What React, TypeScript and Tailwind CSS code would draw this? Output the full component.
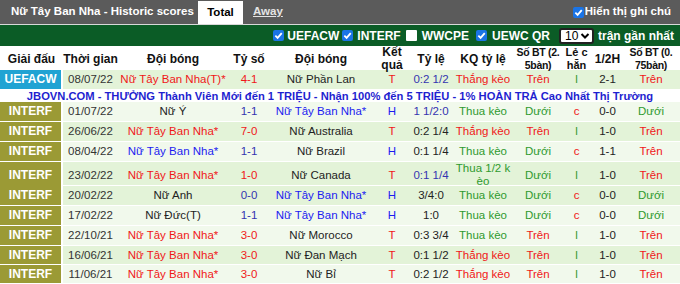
import React from "react";

type Cell = { t: string; c?: string };
type Row = {
  league: string;
  lc: string;
  bg: string;
  h: string;
  cells: Cell[];
};

const RED = "text-[#f01818]";
const BLUE = "text-[#1c1cf0]";
const NAVY = "text-[#3434b0]";
const GREEN = "text-[#2f9a2f]";
const BLK = "text-[#222]";
const G = "bg-[#e3f3d8]";
const L = "bg-[#f1f9ec]";
const INT = "bg-[#9b9a35]";

const rows: Row[] = [
  {
    league: "INTERF", lc: INT, bg: L, h: "h-[20px]",
    cells: [
      { t: "01/07/22" }, { t: "Nữ Ý", c: BLK }, { t: "1-1", c: NAVY }, { t: "Nữ Tây Ban Nha*", c: BLUE },
      { t: "H", c: BLUE }, { t: "1 1/2:0", c: NAVY }, { t: "Thua kèo", c: GREEN }, { t: "Dưới", c: GREEN },
      { t: "c", c: RED }, { t: "0-0", c: BLK }, { t: "Dưới", c: GREEN },
    ],
  },
  {
    league: "INTERF", lc: INT, bg: G, h: "h-[20px]",
    cells: [
      { t: "26/06/22" }, { t: "Nữ Tây Ban Nha*", c: RED }, { t: "7-0", c: RED }, { t: "Nữ Australia", c: BLK },
      { t: "T", c: RED }, { t: "0:2 1/4", c: BLK }, { t: "Thắng kèo", c: RED }, { t: "Trên", c: RED },
      { t: "l", c: GREEN }, { t: "1-0", c: BLK }, { t: "Trên", c: RED },
    ],
  },
  {
    league: "INTERF", lc: INT, bg: L, h: "h-[20px]",
    cells: [
      { t: "08/04/22" }, { t: "Nữ Tây Ban Nha*", c: BLUE }, { t: "1-1", c: NAVY }, { t: "Nữ Brazil", c: BLK },
      { t: "H", c: BLUE }, { t: "0:1 1/4", c: BLK }, { t: "Thua kèo", c: GREEN }, { t: "Dưới", c: GREEN },
      { t: "c", c: RED }, { t: "1-1", c: BLK }, { t: "Trên", c: RED },
    ],
  },
  {
    league: "INTERF", lc: INT, bg: G, h: "h-[24px]",
    cells: [
      { t: "23/02/22" }, { t: "Nữ Tây Ban Nha*", c: RED }, { t: "1-0", c: RED }, { t: "Nữ Canada", c: BLK },
      { t: "T", c: RED }, { t: "0:1 1/4", c: NAVY }, { t: "Thua 1/2 k\nèo", c: GREEN }, { t: "Dưới", c: GREEN },
      { t: "l", c: GREEN }, { t: "1-0", c: BLK }, { t: "Trên", c: RED },
    ],
  },
  {
    league: "INTERF", lc: INT, bg: G, h: "h-[20px]",
    cells: [
      { t: "20/02/22" }, { t: "Nữ Anh", c: BLK }, { t: "0-0", c: NAVY }, { t: "Nữ Tây Ban Nha*", c: BLUE },
      { t: "H", c: BLUE }, { t: "3/4:0", c: BLK }, { t: "Thua kèo", c: GREEN }, { t: "Dưới", c: GREEN },
      { t: "c", c: RED }, { t: "0-0", c: BLK }, { t: "Dưới", c: GREEN },
    ],
  },
  {
    league: "INTERF", lc: INT, bg: L, h: "h-[20px]",
    cells: [
      { t: "17/02/22" }, { t: "Nữ Đức(T)", c: BLK }, { t: "1-1", c: NAVY }, { t: "Nữ Tây Ban Nha*", c: BLUE },
      { t: "H", c: BLUE }, { t: "1:0", c: BLK }, { t: "Thua kèo", c: GREEN }, { t: "Dưới", c: GREEN },
      { t: "c", c: RED }, { t: "0-0", c: BLK }, { t: "Dưới", c: GREEN },
    ],
  },
  {
    league: "INTERF", lc: INT, bg: L, h: "h-[20px]",
    cells: [
      { t: "22/10/21" }, { t: "Nữ Tây Ban Nha*", c: RED }, { t: "3-0", c: RED }, { t: "Nữ Morocco", c: BLK },
      { t: "T", c: RED }, { t: "0:3 3/4", c: BLK }, { t: "Thua kèo", c: GREEN }, { t: "Trên", c: RED },
      { t: "l", c: GREEN }, { t: "1-0", c: BLK }, { t: "Trên", c: RED },
    ],
  },
  {
    league: "INTERF", lc: INT, bg: G, h: "h-[19px]",
    cells: [
      { t: "16/06/21" }, { t: "Nữ Tây Ban Nha*", c: RED }, { t: "3-0", c: RED }, { t: "Nữ Đan Mạch", c: BLK },
      { t: "T", c: RED }, { t: "0:1 1/2", c: BLK }, { t: "Thắng kèo", c: RED }, { t: "Trên", c: RED },
      { t: "l", c: GREEN }, { t: "1-0", c: BLK }, { t: "Trên", c: RED },
    ],
  },
  {
    league: "INTERF", lc: INT, bg: L, h: "h-[19px]",
    cells: [
      { t: "11/06/21" }, { t: "Nữ Tây Ban Nha*", c: RED }, { t: "3-0", c: RED }, { t: "Nữ Bỉ", c: BLK },
      { t: "T", c: RED }, { t: "0:2 1/2", c: BLK }, { t: "Thắng kèo", c: RED }, { t: "Trên", c: RED },
      { t: "l", c: GREEN }, { t: "1-0", c: BLK }, { t: "Trên", c: RED },
    ],
  },
];

const first: Row = {
  league: "UEFACW", lc: "bg-[#20a3d3]", bg: G, h: "h-[20px]",
  cells: [
    { t: "08/07/22" }, { t: "Nữ Tây Ban Nha(T)*", c: RED }, { t: "4-1", c: RED }, { t: "Nữ Phần Lan", c: BLK },
    { t: "T", c: RED }, { t: "0:2 1/2", c: NAVY }, { t: "Thắng kèo", c: RED }, { t: "Trên", c: RED },
    { t: "l", c: GREEN }, { t: "2-1", c: BLK }, { t: "Trên", c: RED },
  ],
};

const COLS = "grid grid-cols-[63px_55px_110px_42px_102px_40px_38px_66px_44px_33px_29px_58px]";

function Check({ on }: { on: boolean }) {
  return on ? (
    <span className="inline-flex w-[11px] h-[11px] rounded-[2px] bg-[#1a74e6] items-center justify-center">
      <svg width="9" height="9" viewBox="0 0 10 10">
        <path d="M1.5 5.2 L4 7.6 L8.6 2.3" fill="none" stroke="white" strokeWidth="2" />
      </svg>
    </span>
  ) : (
    <span className="inline-block w-[11px] h-[11px] rounded-[1px] bg-white" />
  );
}

function DataRow({ r }: { r: Row }) {
  return (
    <div className={`${COLS} ${r.h} ${r.bg} border-b border-white text-[11.5px] leading-[13px]`}>
      <div className={`${r.lc} border-r-2 border-white flex items-center justify-center text-white font-bold text-[12px]`}>
        {r.league}
      </div>
      {r.cells.map((c, i) => (
        <div key={i} className={`flex items-center justify-center text-center whitespace-pre ${c.c ?? "text-[#333]"}`}>
          {c.t}
        </div>
      ))}
    </div>
  );
}

export default function App() {
  const heads = [
    "Giải đấu", "Thời gian", "Đội bóng", "Tỷ số", "Đội bóng", "Kết\nquả", "Tỷ lệ", "KQ tỷ lệ",
    "Số BT (2.\n5bàn)", "Lẻ c\nhẵn", "1/2H", "Số BT (0.\n75bàn)",
  ];
  return (
    <div className="w-[680px] h-[284px] overflow-hidden bg-white font-['Liberation_Sans',Arial,sans-serif]">
      <div className="h-[24px] bg-[#5b5b5b] flex items-end text-[11.5px] font-bold">
        <div className="h-full flex items-center pl-[11px] w-[198px] text-white whitespace-nowrap">Nữ Tây Ban Nha - Historic scores</div>
        <div className="h-[23px] w-[45px] bg-white text-black flex items-center justify-center">Total</div>
        <div className="h-full flex items-center pl-[10px] text-[#e4e4e4] underline">Away</div>
        <div className="ml-auto h-full flex items-center gap-[1px] pr-[9px] text-white">
          <Check on />
          <span>Hiển thị ghi chú</span>
        </div>
      </div>
      <div className="h-px bg-[#d9d9d9]" />
      <div className="h-[21px] bg-[#0b5c26] flex items-center justify-end pr-[6px] text-white text-[12px] font-bold">
        <Check on />
        <span className="ml-[3px]">UEFACW</span>
        <span className="ml-[3px] flex"><Check on /></span>
        <span className="ml-[4px]">INTERF</span>
        <span className="ml-[5px] flex"><Check on={false} /></span>
        <span className="ml-[5px]">WWCPE</span>
        <span className="ml-[7px] flex"><Check on /></span>
        <span className="ml-[5px]">UEWC QR</span>
        <span className="ml-[9px] w-[35px] h-[16px] bg-white border-2 border-[#222] rounded-[3px] flex items-center justify-between pl-[4px] pr-[2px] text-black font-normal text-[12px]">
          10
          <svg width="10" height="8" viewBox="0 0 10 8">
            <path d="M1.5 2 L5 5.5 L8.5 2" fill="none" stroke="black" strokeWidth="2" />
          </svg>
        </span>
        <span className="ml-[4px]">trận gần nhất</span>
      </div>
      <div className={`${COLS} h-[24px] bg-white border-b border-white text-[12px] font-bold leading-[13px] text-[#111]`}>
        {heads.map((h, i) => (
          <div
            key={i}
            className={`flex items-center justify-center text-center whitespace-pre ${i === 8 || i === 11 ? "text-[10.5px] tracking-[-0.3px]" : i === 9 ? "text-[11px]" : ""}`}
          >
            {h}
          </div>
        ))}
      </div>
      <DataRow r={first} />
      <div className="h-[12px] flex items-center justify-center text-[11.2px] font-bold text-[#1f1fd0] whitespace-nowrap">
        JBOVN.COM - THƯỞNG Thành Viên Mới đến 1 TRIỆU - Nhận 100% đến 5 TRIỆU - 1% HOÀN TRẢ Cao Nhất Thị Trường
      </div>
      {rows.map((r, i) => (
        <DataRow key={i} r={r} />
      ))}
    </div>
  );
}
